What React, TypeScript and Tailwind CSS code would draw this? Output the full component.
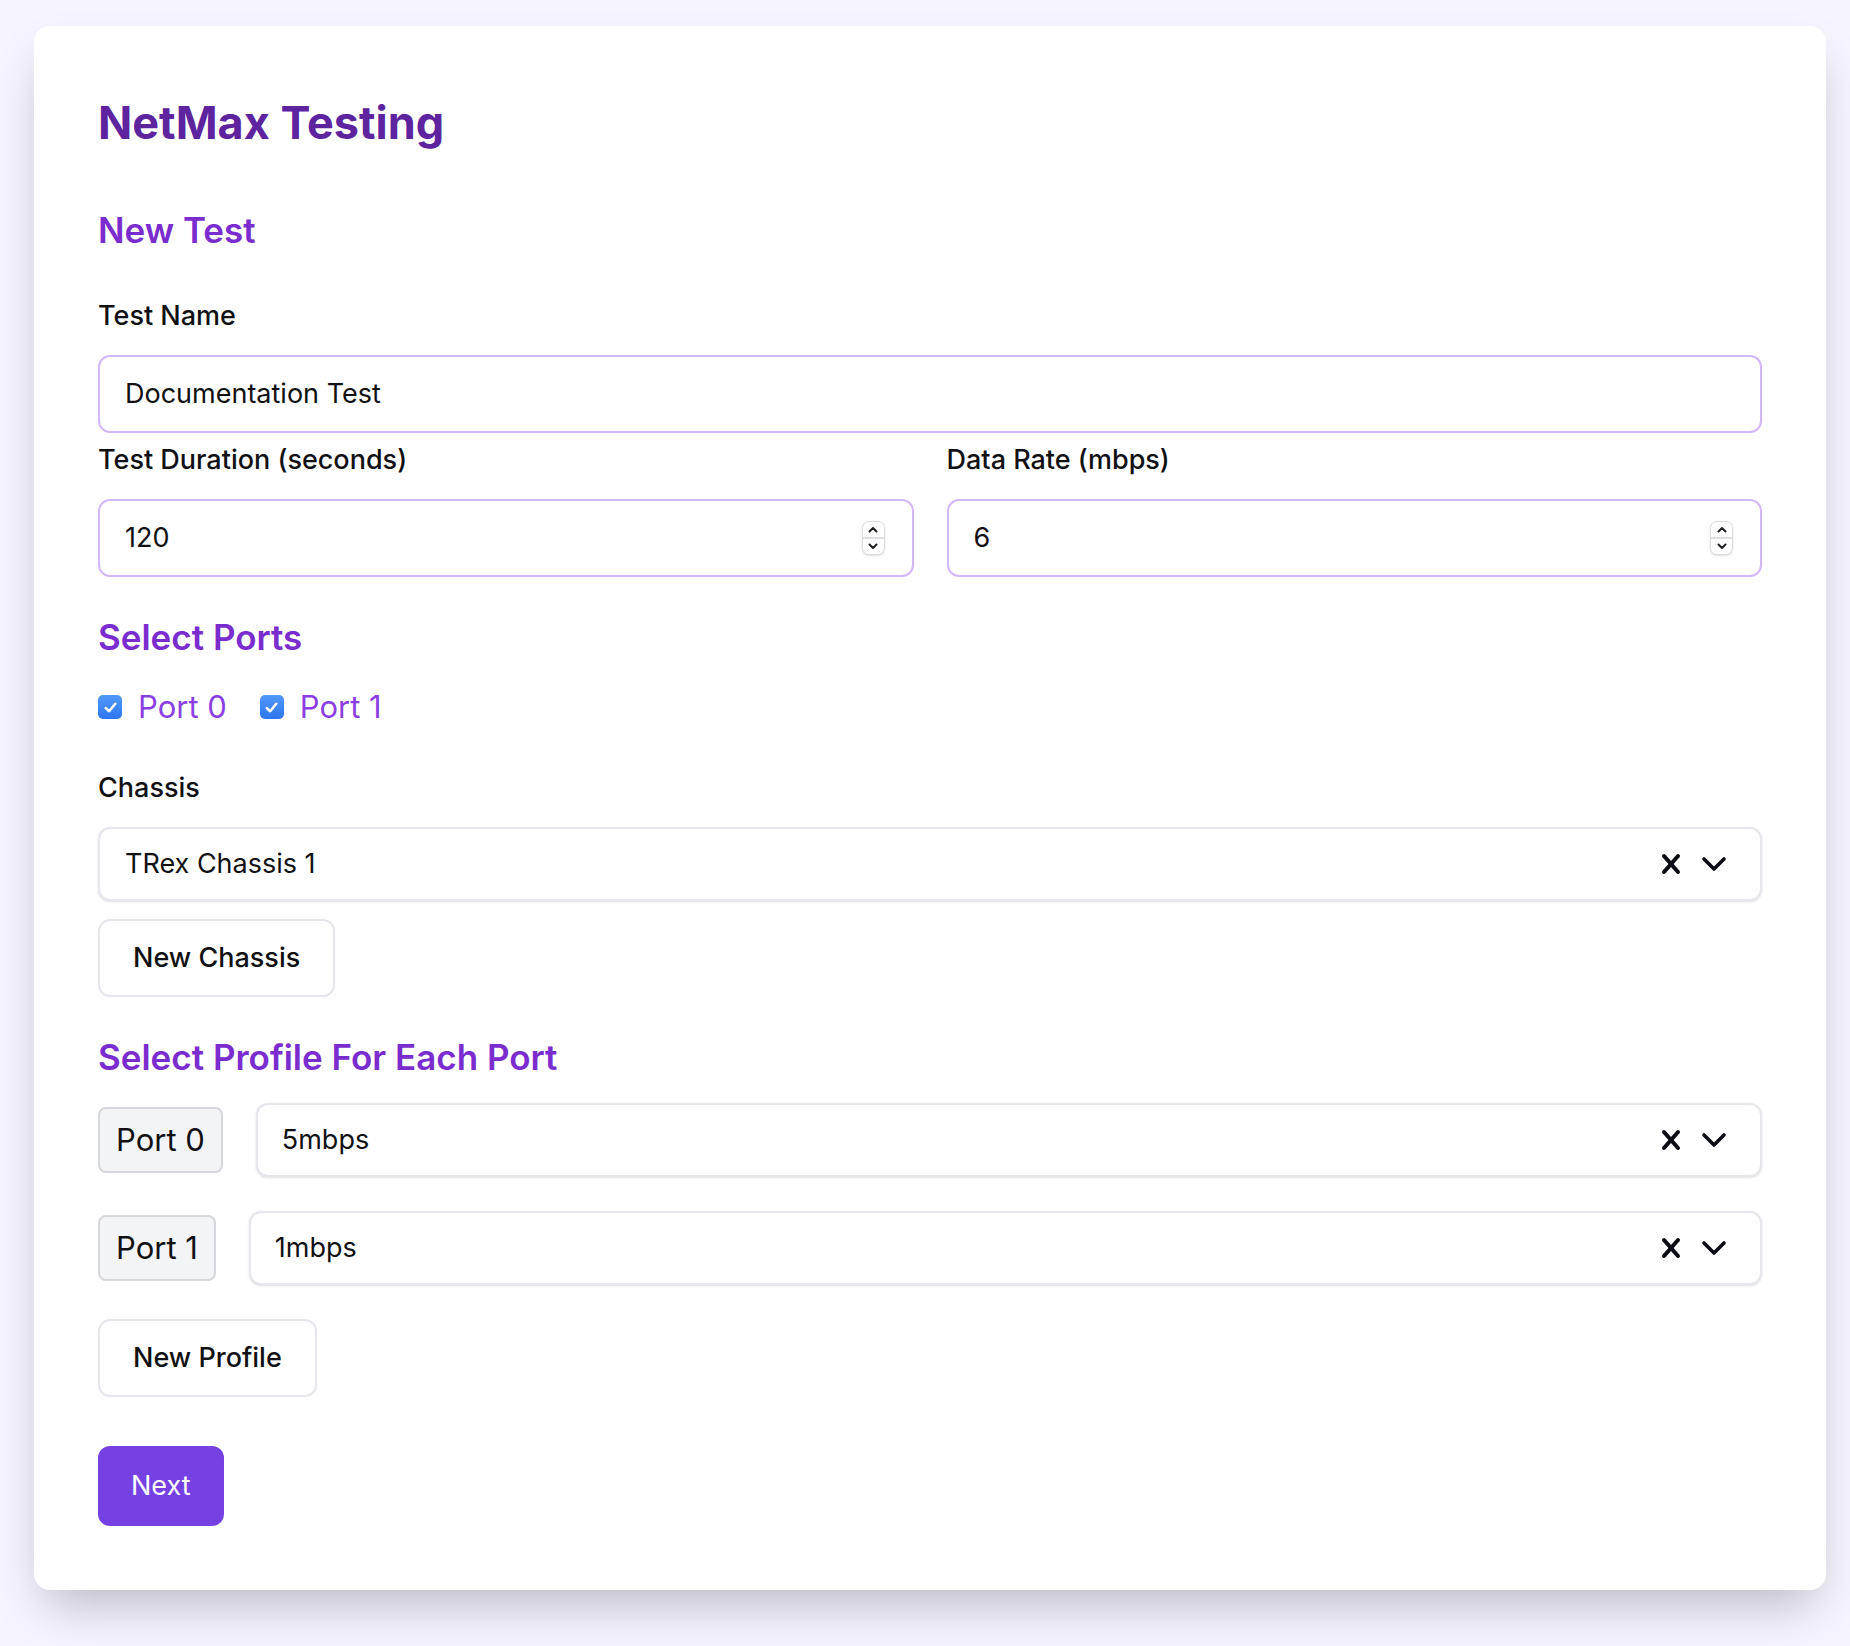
import { useState } from "react";

const labelCls = "block h-8 text-[27px] leading-8 font-medium text-[#111114]";
const headingCls = "h-10 text-[35px] leading-10 font-semibold text-[#7a2ccf]";
const badgeCls =
  "flex h-[66px] items-center rounded-lg border-2 border-[#d6d6dc] bg-[#f3f4f6] px-[16px] text-[31px] text-[#111114]";

const XIcon = () => (
  <svg width="20" height="22" viewBox="0 0 20 22" fill="none" stroke="currentColor" strokeWidth="4" strokeLinecap="round">
    <path d="M3 3 L17 19" />
    <path d="M17 3 L3 19" />
  </svg>
);

const ChevronDown = () => (
  <svg width="26" height="16" viewBox="0 0 26 16" fill="none" stroke="currentColor" strokeWidth="3.6" strokeLinecap="round" strokeLinejoin="round">
    <path d="M3 3 L13 13 L23 3" />
  </svg>
);

const Spinner = () => (
  <div className="flex h-[34px] w-[23px] flex-col overflow-hidden rounded-[7px] border border-[#dcdce2] bg-white shadow-sm">
    <div className="flex flex-1 items-center justify-center">
      <svg width="10" height="7" viewBox="0 0 10 7" fill="none" stroke="#1f1f24" strokeWidth="2" strokeLinecap="round" strokeLinejoin="round">
        <path d="M1.5 5.5 L5 2 L8.5 5.5" />
      </svg>
    </div>
    <div className="h-[2px] bg-[#dedee3]" />
    <div className="flex flex-1 items-center justify-center">
      <svg width="10" height="7" viewBox="0 0 10 7" fill="none" stroke="#1f1f24" strokeWidth="2" strokeLinecap="round" strokeLinejoin="round">
        <path d="M1.5 1.5 L5 5 L8.5 1.5" />
      </svg>
    </div>
  </div>
);

const NumberField = ({ value }: { value: string }) => (
  <div className="flex h-[78px] items-center rounded-xl border-2 border-[#d2b8fb] bg-white pl-[25px] pr-[27px]">
    <input
      type="text"
      defaultValue={value}
      className="min-w-0 flex-1 bg-transparent text-[27px] text-[#111114] outline-none"
    />
    <Spinner />
  </div>
);

const SelectBox = ({ value, pl = "pl-[25px]" }: { value: string; pl?: string }) => (
  <div className={`flex h-[74px] flex-1 items-center rounded-xl border-2 border-[#e6e6ec] bg-white pr-[33px] shadow-sm ${pl}`}>
    <span className="flex-1 text-[27px] text-[#111114]">{value}</span>
    <span className="text-[#0b0b14]">
      <XIcon />
    </span>
    <span className="ml-[20px] text-[#0b0b14]">
      <ChevronDown />
    </span>
  </div>
);

const PortCheck = ({ name, checked, onToggle }: { name: string; checked: boolean; onToggle: () => void }) => (
  <label className="flex cursor-pointer items-center gap-4" onClick={onToggle}>
    <span
      className={`flex h-6 w-6 items-center justify-center rounded-[5px] ${
        checked ? "bg-linear-to-b from-[#519af9] to-[#2f74ef]" : "border-2 border-gray-400 bg-white"
      }`}
    >
      {checked && (
        <svg width="17" height="17" viewBox="0 0 16 16" fill="none" stroke="white" strokeWidth="2.4" strokeLinecap="round" strokeLinejoin="round">
          <path d="M3.5 8.5 L6.7 11.5 L12.5 4.5" />
        </svg>
      )}
    </span>
    <span className="text-[31px] leading-8 text-[#8b3fe3]">{name}</span>
  </label>
);

const App = () => {
  const [ports, setPorts] = useState([true, true]);

  const togglePort = (i: number) => {
    setPorts(ports.map((p, idx) => (idx === i ? !p : p)));
  };

  return (
    <div className="min-h-screen bg-[#f6f4fe] pl-[34px] pr-[24px] pt-[26px] pb-[56px] font-['Inter',sans-serif]">
      <div className="flex flex-col rounded-2xl bg-white px-[64px] pt-[73px] pb-[64px] shadow-2xl">
        <h1 className="h-12 text-[45px] leading-[48px] font-bold text-[#5e239f]">NetMax Testing</h1>

        <h2 className={`mt-[63px] ${headingCls}`}>New Test</h2>

        <label className={`mt-[50px] ${labelCls}`}>Test Name</label>
        <div className="mt-[23px] flex h-[78px] items-center rounded-xl border-2 border-[#d2b8fb] bg-white px-[25px]">
          <input
            type="text"
            defaultValue="Documentation Test"
            className="w-full bg-transparent text-[27px] text-[#111114] outline-none"
          />
        </div>

        <div className="mt-[11px] grid grid-cols-2 gap-x-[33px]">
          <div className="flex flex-col">
            <label className={labelCls}>Test Duration (seconds)</label>
            <div className="mt-[23px]">
              <NumberField value="120" />
            </div>
          </div>
          <div className="flex flex-col">
            <label className={labelCls}>Data Rate (mbps)</label>
            <div className="mt-[23px]">
              <NumberField value="6" />
            </div>
          </div>
        </div>

        <h2 className={`mt-[40px] ${headingCls}`}>Select Ports</h2>
        <div className="mt-[34px] flex h-8 items-center gap-[33px]">
          <PortCheck name="Port 0" checked={ports[0]} onToggle={() => togglePort(0)} />
          <PortCheck name="Port 1" checked={ports[1]} onToggle={() => togglePort(1)} />
        </div>

        <label className={`mt-[49px] ${labelCls}`}>Chassis</label>
        <div className="mt-[23px] flex">
          <SelectBox value="TRex Chassis 1" />
        </div>
        <div className="mt-[18px]">
          <button className="h-[78px] rounded-xl border-2 border-[#e6e6ec] bg-white px-[33px] text-[27px] font-medium text-[#111114]">
            New Chassis
          </button>
        </div>

        <h2 className={`mt-[40px] ${headingCls}`}>Select Profile For Each Port</h2>
        <div className="mt-[26px] flex items-center gap-[33px]">
          <div className={badgeCls}>Port 0</div>
          <SelectBox value="5mbps" pl="pl-[24px]" />
        </div>
        <div className="mt-[34px] flex items-center gap-[33px]">
          <div className={badgeCls}>Port 1</div>
          <SelectBox value="1mbps" pl="pl-[24px]" />
        </div>
        <div className="mt-[34px]">
          <button className="h-[78px] rounded-xl border-2 border-[#e6e6ec] bg-white px-[33px] text-[27px] font-medium text-[#111114]">
            New Profile
          </button>
        </div>

        <div className="mt-[49px]">
          <button className="h-[80px] rounded-xl bg-[#7641e3] px-[33px] text-[27px] text-white">Next</button>
        </div>
      </div>
    </div>
  );
};

export default App;
